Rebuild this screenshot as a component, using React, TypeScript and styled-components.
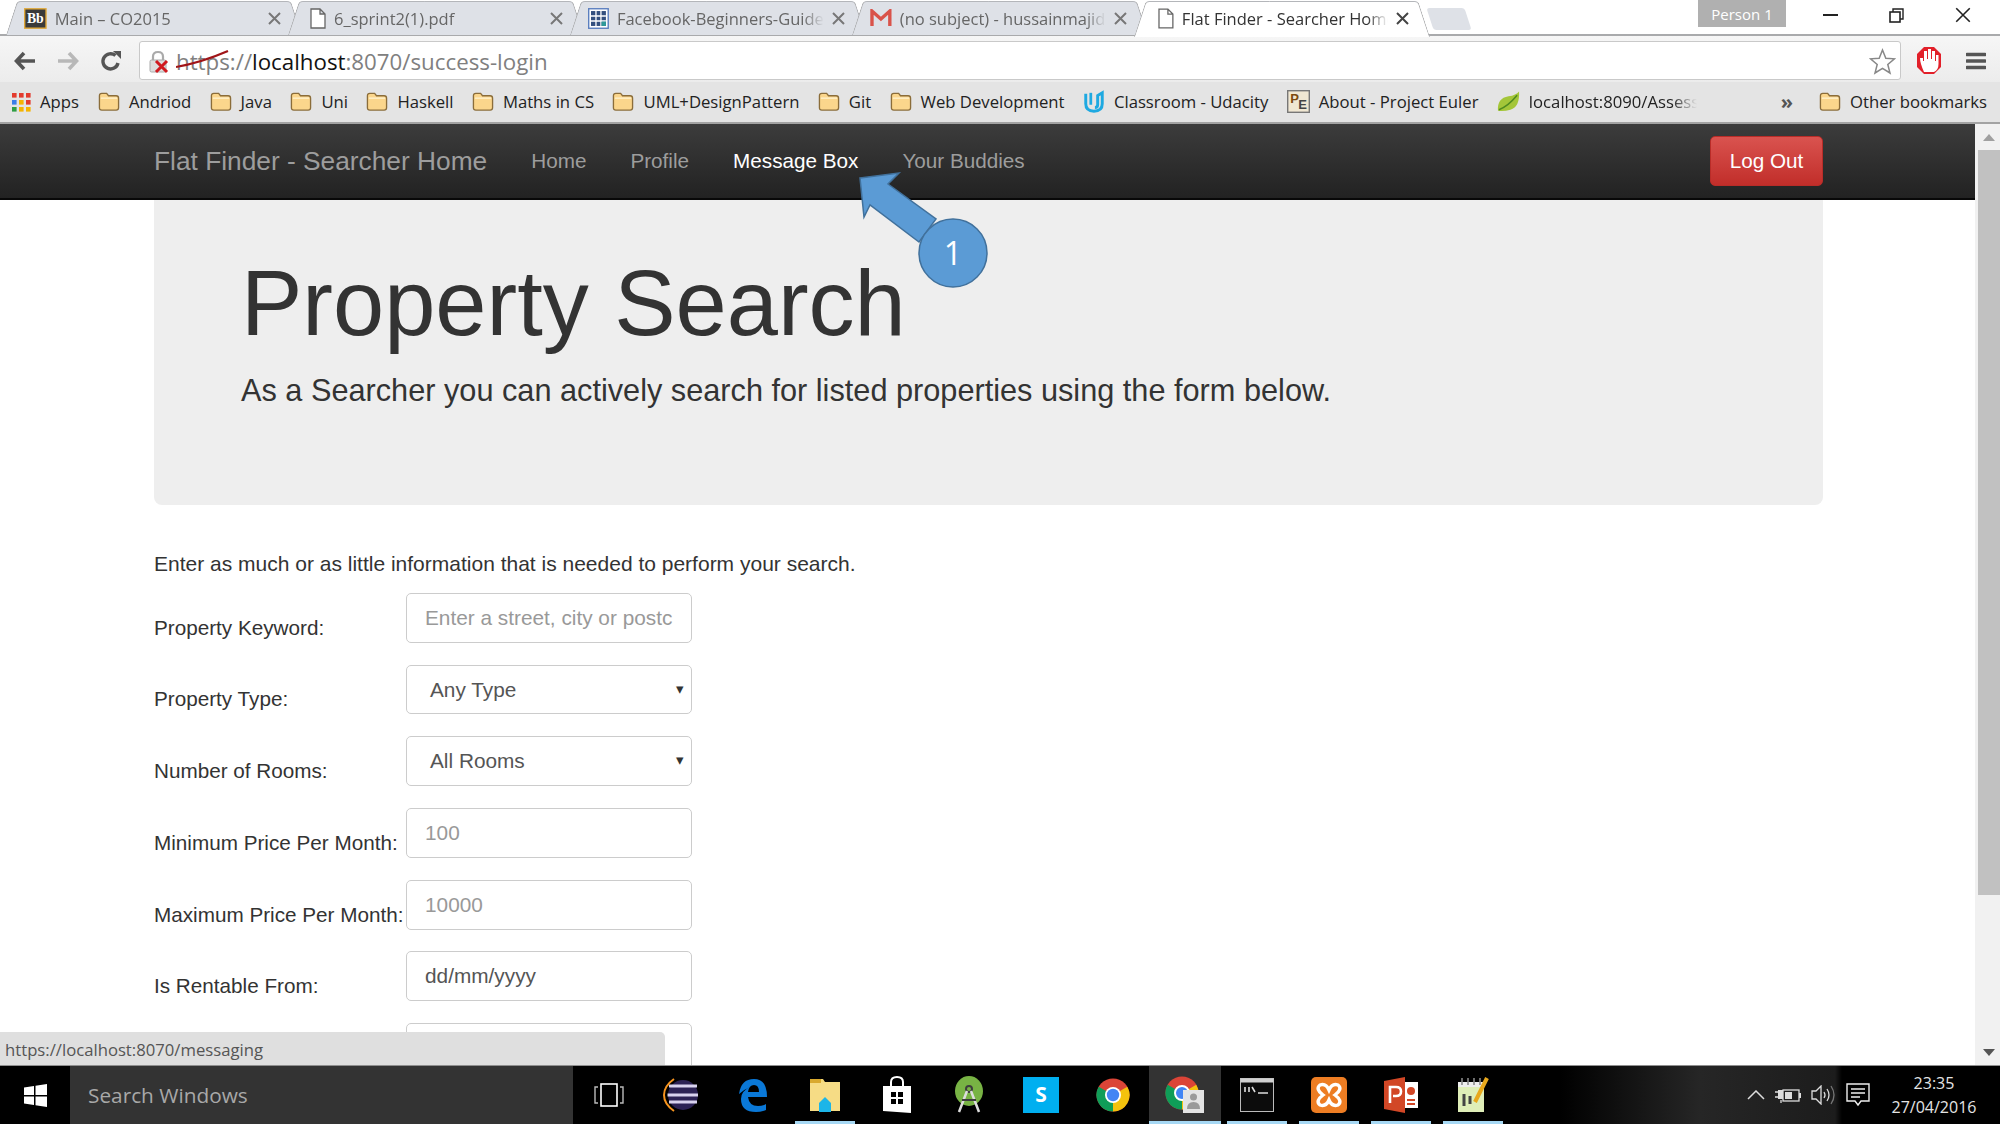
import React from 'react';
import styled, { createGlobalStyle } from 'styled-components';

const GlobalStyle = createGlobalStyle`
  html, body { margin: 0; padding: 0; background: #fff; }
  * { box-sizing: border-box; }
  body { font-family: 'Liberation Sans', Arial, sans-serif; }
`;

const Screen = styled.div`
  width: 2000px;
  height: 1124px;
  display: flex;
  flex-direction: column;
  overflow: hidden;
`;

/* ---------- browser chrome ---------- */

const TabStrip = styled.div`
  height: 36px;
  flex: none;
  display: flex;
  align-items: flex-start;
  padding-left: 6px;
  background: #fff;
  border-bottom: 2px solid #a9aaac;
`;

const Tab = styled.div<{ $active?: boolean; $indent?: number }>`
  position: relative;
  width: 296px;
  height: ${(p) => (p.$active ? '36px' : '34px')};
  margin: 1px -14px 0 0;
  padding-left: ${(p) => p.$indent ?? 18}px;
  padding-bottom: ${(p) => (p.$active ? 2 : 0)}px;
  display: flex;
  align-items: center;
  gap: 8px;
  z-index: ${(p) => (p.$active ? 2 : 1)};
  font-family: 'Open Sans', sans-serif;
  font-size: 16.5px;
  color: ${(p) => (p.$active ? '#333' : '#666')};

  &::before,
  &::after {
    content: '';
    position: absolute;
    top: 0;
    bottom: 0;
    width: 50%;
    z-index: -1;
    background: ${(p) => (p.$active ? '#fff' : '#dee1e7')};
    border-top: 1px solid #b4b6ba;
  }
  &::before {
    left: 0;
    transform: skewX(-18deg);
    transform-origin: bottom;
    border-left: 1px solid #a9aaac;
    border-radius: 4px 0 0 0;
  }
  &::after {
    right: 0;
    transform: skewX(18deg);
    transform-origin: bottom;
    border-right: 1px solid #a9aaac;
    border-radius: 0 4px 0 0;
  }
`;

const TabTitle = styled.span`
  width: 208px;
  white-space: nowrap;
  overflow: hidden;
  mask-image: linear-gradient(90deg, #000 90%, transparent);
`;

const TabClose = styled.span`
  margin-left: auto;
  margin-right: 21px;
  display: flex;
`;

const NewTab = styled.div`
  width: 38px;
  height: 22px;
  margin: 8px 0 0 14px;
  background: #dee1e7;
  border-radius: 3px;
  transform: skewX(18deg);
`;

const PersonBadge = styled.div`
  width: 88px;
  height: 27px;
  margin-left: auto;
  background: #b0b0b0;
  color: #fff;
  font-family: 'Open Sans', sans-serif;
  font-size: 15px;
  display: flex;
  align-items: center;
  justify-content: center;
`;

const WindowControls = styled.div`
  width: 214px;
  height: 30px;
  padding: 0 4px 0 11px;
  display: flex;
`;

const WindowButton = styled.div`
  flex: 1;
  display: flex;
  align-items: center;
  justify-content: center;
`;

const Toolbar = styled.div`
  height: 46px;
  flex: none;
  display: flex;
  align-items: center;
  background: linear-gradient(#f6f6f6, #ececec);
  padding: 3px 0 0 0;
`;

const NavIcons = styled.div`
  width: 139px;
  display: flex;
  align-items: center;
  padding-left: 14px;
  gap: 21px;
`;

const AddressBar = styled.div`
  width: 1762px;
  height: 39px;
  background: #fff;
  border: 1px solid #c9c9c9;
  border-radius: 3px;
  display: flex;
  align-items: center;
  padding: 2px 4px 0 7px;
  font-family: 'Open Sans', sans-serif;
  font-size: 22.3px;
  color: #808080;
`;

const Scheme = styled.span`
  margin-left: 5px;
  position: relative;
`;

const StruckOut = styled.svg`
  position: absolute;
  left: 0;
  top: 3px;
`;

const Host = styled.span`
  color: #111;
`;

const StarSlot = styled.span`
  margin-left: auto;
  display: flex;
`;

const ToolbarEnd = styled.div`
  flex: 1;
  display: flex;
  align-items: center;
  justify-content: space-between;
  padding: 0 14px 0 15px;
`;

const BookmarksBar = styled.div`
  height: 42px;
  flex: none;
  display: flex;
  align-items: center;
  padding: 0 13px 1px 11px;
  background: #e4e4e4;
  border-bottom: 2px solid #a3a3a3;
  font-family: 'Open Sans', sans-serif;
  font-size: 16.7px;
  color: #222;
  white-space: nowrap;
`;

const Bookmark = styled.span<{ $gap?: number }>`
  display: flex;
  align-items: center;
  gap: 9px;
  margin-right: ${(p) => p.$gap ?? 19}px;
`;

const FadedLabel = styled.span`
  width: 168px;
  overflow: hidden;
  mask-image: linear-gradient(90deg, #000 85%, transparent);
`;

const Chevrons = styled.span`
  margin-left: auto;
  margin-right: 26px;
  font-weight: 700;
  font-size: 20px;
  color: #555;
  line-height: 1;
`;

/* ---------- page ---------- */

const Viewport = styled.div`
  position: relative;
  flex: 1;
  min-height: 0;
  display: flex;
  overflow: hidden;
`;

const Page = styled.div`
  flex: 1;
  min-width: 0;
  background: #fff;
`;

const NavBar = styled.nav`
  height: 76px;
  display: flex;
  align-items: center;
  padding: 0 152px 0 154px;
  background: linear-gradient(#3c3c3c, #222);
  border-bottom: 2px solid #080808;
`;

const Brand = styled.a`
  font-size: 26.3px;
  color: #9d9d9d;
  margin-right: 44px;
`;

const NavLink = styled.a<{ $active?: boolean }>`
  font-size: 20.7px;
  color: ${(p) => (p.$active ? '#fff' : '#9d9d9d')};
  margin-right: 44px;
`;

const LogOut = styled.button`
  margin-left: auto;
  width: 113px;
  height: 50px;
  border: 1px solid #b92c28;
  border-radius: 5px;
  background: linear-gradient(#d9534f, #c12e2a);
  color: #fff;
  font-family: inherit;
  font-size: 20.7px;
`;

const Container = styled.main`
  padding: 0 152px 0 154px;
`;

const Jumbotron = styled.section`
  height: 305px;
  padding: 53px 87px 0;
  background: #eee;
  border-radius: 0 0 8px 8px;
  color: #333;
`;

const Title = styled.h1`
  margin: 0;
  font-weight: 400;
  font-size: 92px;
  line-height: 101px;
  color: #333;
`;

const Lead = styled.p`
  margin: 15px 0 0;
  font-size: 30.7px;
  line-height: 44px;
`;

const Intro = styled.p`
  margin: 47px 0 0;
  font-size: 21px;
  line-height: 24px;
  color: #333;
`;

const Form = styled.form`
  margin-top: 17px;
  display: flex;
  flex-direction: column;
  gap: 21.9px;
`;

const Row = styled.div`
  display: grid;
  grid-template-columns: 252px 286px;
  align-items: end;
`;

const Label = styled.label`
  font-size: 20.7px;
  line-height: 24px;
  color: #333;
  white-space: nowrap;
  padding-bottom: 3px;
`;

const Field = styled.div<{ $placeholder?: boolean }>`
  position: relative;
  height: 49.8px;
  border: 1px solid #ccc;
  border-radius: 5px;
  background: #fff;
  display: flex;
  align-items: center;
  padding: 0 18px;
  font-size: 20.8px;
  color: ${(p) => (p.$placeholder ? '#999' : '#555')};
  white-space: nowrap;
  overflow: hidden;
`;

const SelectText = styled.span`
  margin-left: 5px;
`;

const SelectCaret = styled.span`
  position: absolute;
  right: 7px;
  top: 14px;
  font-size: 15px;
  color: #333;
`;

const Scrollbar = styled.div`
  width: 25px;
  flex: none;
  padding-left: 3px;
  background: #f1f1f1;
  display: flex;
  flex-direction: column;
  align-items: center;
`;

const ScrollArrow = styled.div<{ $down?: boolean }>`
  height: 26px;
  flex: none;
  display: flex;
  align-items: center;
  justify-content: center;
  ${(p) => p.$down && 'margin-top: auto;'}
`;

const ScrollThumb = styled.div`
  width: 100%;
  height: 745px;
  background: #c1c1c1;
`;

const StatusBubble = styled.div`
  position: absolute;
  left: 0;
  bottom: 0;
  width: 665px;
  height: 33px;
  padding: 2px 0 0 5px;
  display: flex;
  align-items: center;
  background: #dfdfdf;
  border-radius: 0 5px 0 0;
  font-family: 'Open Sans', sans-serif;
  font-size: 16.7px;
  color: #555;
`;

const Callout = styled.svg`
  position: absolute;
  left: 850px;
  top: 41px;
`;

/* ---------- taskbar ---------- */

const Taskbar = styled.footer`
  height: 59px;
  flex: none;
  display: flex;
  align-items: stretch;
  border-top: 1px solid #8f8f8f;
  background: linear-gradient(90deg, #000 0, #000 1560px, #262626 1700px, #1c1c1c 1835px, #000 1842px);
  color: #fff;
  font-family: 'Open Sans', sans-serif;
`;

const StartButton = styled.div`
  width: 70px;
  display: flex;
  align-items: center;
  justify-content: center;
`;

const SearchBox = styled.div`
  width: 503px;
  background: #333;
  color: #a8a8a8;
  font-size: 20.8px;
  display: flex;
  align-items: center;
  padding-left: 18px;
`;

const TaskItem = styled.div<{ $running?: boolean; $current?: boolean }>`
  position: relative;
  width: 72px;
  display: flex;
  align-items: center;
  justify-content: center;
  background: ${(p) => (p.$current ? '#333' : 'transparent')};

  ${(p) =>
    p.$running &&
    `&::after {
      content: '';
      position: absolute;
      bottom: 0;
      height: 3px;
      left: ${p.$current ? 0 : 6}px;
      right: ${p.$current ? 0 : 6}px;
      background: #a6d8f4;
    }`}
`;

const Tray = styled.div`
  margin-left: auto;
  display: flex;
  align-items: center;
  gap: 10px;
  padding-right: 21px;
`;

const Clock = styled.div`
  width: 90px;
  margin-left: 9px;
  text-align: center;
  font-size: 16px;
  line-height: 24px;
  color: #e4e4e4;
`;

/* ---------- small drawings ---------- */

const FolderIcon = () => (
  <svg width="22" height="21" viewBox="0 0 23 21">
    <path d="M1.5 4.5 Q1.5 2 4 2 H9 L11 4.5 H19 Q21.5 4.5 21.5 7 V17 Q21.5 19.5 19 19.5 H4 Q1.5 19.5 1.5 17 Z" fill="#fbd68c" stroke="#8b6d3a" strokeWidth="1.4" />
    <path d="M3 7 H20" stroke="#fff0c8" strokeWidth="1.5" />
  </svg>
);

const PageIcon = () => (
  <svg width="16" height="21" viewBox="0 0 16 21">
    <path d="M1 1 H10 L15 6 V20 H1 Z M10 1 V6 H15" fill="#fff" stroke="#666" strokeWidth="1.3" />
  </svg>
);

const CloseGlyph = ({ size = 13, color = '#777', weight = 2 }: { size?: number; color?: string; weight?: number }) => (
  <svg width={size} height={size} viewBox="0 0 13 13">
    <path d="M1 1 L12 12 M12 1 L1 12" stroke={color} strokeWidth={weight} />
  </svg>
);

const BlackboardIcon = () => (
  <svg width="23" height="21" viewBox="0 0 23 21">
    <rect x="0.7" y="0.7" width="21.6" height="19.6" fill="#3a3a3a" stroke="#e0a838" strokeWidth="1.4" />
    <text x="11.5" y="15.5" textAnchor="middle" fontFamily="Liberation Serif, serif" fontWeight="700" fontSize="14" fill="#fff">Bb</text>
  </svg>
);

const SheetIcon = () => (
  <svg width="21" height="21" viewBox="0 0 21 21">
    <rect x="0.7" y="0.7" width="19.6" height="19.6" fill="#fff" stroke="#5b7fbf" strokeWidth="1.4" />
    <path d="M3 3 H18 V18 H3 Z" fill="#34507f" />
    <path d="M8 3 V18 M13 3 V18 M3 8 H18 M3 13 H18" stroke="#fff" strokeWidth="1.3" />
    <rect x="13.6" y="13.6" width="4.4" height="4.4" fill="#2e9a9a" />
  </svg>
);

const GmailIcon = () => (
  <svg width="22" height="18" viewBox="0 0 22 18">
    <path d="M2 17 V2 L11 10 L20 2 V17" fill="none" stroke="#d9534a" strokeWidth="3.4" />
  </svg>
);

const AppsIcon = () => (
  <svg width="20" height="20" viewBox="0 0 20 20">
    {['#e33b2e', '#e33b2e', '#e33b2e', '#3a7ee8', '#f5b400', '#e33b2e', '#2f9e44', '#f5b400', '#f5b400'].map((c, i) => (
      <rect key={i} x={1 + (i % 3) * 7} y={1 + Math.floor(i / 3) * 7} width="4.6" height="4.6" fill={c} />
    ))}
  </svg>
);

const UdacityIcon = () => (
  <svg width="22" height="24" viewBox="0 0 24 24">
    <path d="M3 3 V14 Q3 22 12 22 Q21 22 21 14 V2 L16 5 V15 Q16 18 13 18" fill="none" stroke="#1ea9e1" strokeWidth="3.2" />
    <path d="M8.5 2 V15" stroke="#1ea9e1" strokeWidth="3" />
  </svg>
);

const EulerIcon = () => (
  <svg width="23" height="23" viewBox="0 0 23 23">
    <rect x="0.7" y="0.7" width="21.6" height="21.6" fill="#f0e7d2" stroke="#777" strokeWidth="1.4" />
    <text x="7.5" y="13" textAnchor="middle" fontFamily="Liberation Sans, sans-serif" fontWeight="700" fontSize="13" fill="#7a4a10">P</text>
    <text x="15.5" y="19" textAnchor="middle" fontFamily="Liberation Sans, sans-serif" fontWeight="700" fontSize="13" fill="#444">E</text>
  </svg>
);

const LeafIcon = () => (
  <svg width="23" height="22" viewBox="0 0 24 22">
    <path d="M1 20 Q0 7 12 5 Q20 4 23 0 Q24 16 14 19 Q7 21 1 20 Z" fill="#a4c639" />
    <path d="M2 19 Q11 16 21 4" fill="none" stroke="#4f8a1f" strokeWidth="1.6" />
  </svg>
);

const BackArrow = ({ color = '#555' }: { color?: string }) => (
  <svg width="22" height="20" viewBox="0 0 22 20">
    <path d="M10 2 L2.5 10 L10 18 M3 10 H21" fill="none" stroke={color} strokeWidth="3.6" />
  </svg>
);

const ForwardArrow = () => (
  <svg width="22" height="20" viewBox="0 0 22 20">
    <path d="M12 2 L19.5 10 L12 18 M19 10 H1" fill="none" stroke="#b8b8b8" strokeWidth="3.6" />
  </svg>
);

const ReloadIcon = () => (
  <svg width="22" height="22" viewBox="0 0 22 22">
    <path d="M18 13 A7.6 7.6 0 1 1 15.5 5.5" fill="none" stroke="#555" strokeWidth="3.4" />
    <path d="M13 1 H21 V9 Z" fill="#555" />
  </svg>
);

const BrokenLock = () => (
  <svg width="24" height="24" viewBox="0 0 24 24">
    <path d="M6 11 V6.5 Q6 2 11 2 Q16 2 16 6.5 V11" fill="none" stroke="#aaa" strokeWidth="2.2" />
    <rect x="3" y="10" width="16" height="12" rx="1.5" fill="#ddd" stroke="#aaa" />
    <path d="M9 11 L20 22 M20 11 L9 22" stroke="#d0191f" strokeWidth="3" />
  </svg>
);

const StarOutline = () => (
  <svg width="27" height="27" viewBox="0 0 27 27">
    <path d="M13.5 2 L16.8 10.2 L25.5 10.8 L18.8 16.4 L21 25 L13.5 20.3 L6 25 L8.2 16.4 L1.5 10.8 L10.2 10.2 Z" fill="#fff" stroke="#888" strokeWidth="1.5" />
  </svg>
);

const BlockerIcon = () => (
  <svg width="26" height="29" viewBox="0 0 26 29">
    <path d="M8 1 H18 L25 8 V21 L18 28 H8 L1 21 V8 Z" fill="#e2202a" />
    <path d="M8 26 Q4 17 4 12 H7 V15 H8 V5 H11 V13 H12 V3 H15 V13 H16 V5 H19 V15 H20 V9 H22.5 V18 Q22.5 24 18 26 Z" fill="#fff" />
  </svg>
);

const MenuIcon = () => (
  <svg width="20" height="20" viewBox="0 0 20 20">
    <path d="M1 3.5 H19 M1 10 H19 M1 16.5 H19" stroke="#555" strokeWidth="3.4" strokeLinecap="round" />
  </svg>
);

const WindowsLogo = () => (
  <svg width="23" height="23" viewBox="0 0 23 23">
    <path d="M0 3.5 L10 2 V11 H0 Z M11.5 1.7 L23 0 V11 H11.5 Z M0 12.5 H10 V21 L0 19.6 Z M11.5 12.5 H23 V23 L11.5 21.3 Z" fill="#fff" />
  </svg>
);

const TaskViewIcon = () => (
  <svg width="30" height="24" viewBox="0 0 30 24">
    <rect x="7" y="1" width="16" height="22" fill="none" stroke="#fff" strokeWidth="1.6" />
    <path d="M4 4 H1 V20 H4 M26 4 H29 V20 H26" fill="none" stroke="#bbb" strokeWidth="1.4" />
  </svg>
);

const EclipseIcon = () => (
  <svg width="36" height="36" viewBox="0 0 36 36">
    <circle cx="20" cy="18" r="15" fill="#2c2255" />
    <path d="M6 9 H34 M4.5 18 H35 M6 25 H34" stroke="#d8d2ee" strokeWidth="3" />
    <path d="M11 2 Q1 9 1 18 Q1 27 11 34" fill="none" stroke="#f7941e" strokeWidth="2" />
  </svg>
);

const EdgeIcon = () => (
  <svg width="32" height="36" viewBox="0 0 32 36">
    <path d="M2 17 Q4 2 17 2 Q30 2 30 20 H11 Q12 29 21 29 Q26 29 29 27 V33 Q24 35 19 35 Q4 35 4 22 Q4 14 13 10 Q8 12 2 17 Z M11 15 H22 Q22 8 17 8 Q12 8 11 15 Z" fill="#0a78d7" fillRule="evenodd" />
  </svg>
);

const ExplorerIcon = () => (
  <svg width="32" height="36" viewBox="0 0 32 36">
    <path d="M1 2 H14 L16 5 H31 V34 H1 Z" fill="#f3d774" />
    <rect x="1" y="5" width="30" height="29" fill="#f6dc85" />
    <rect x="1" y="2" width="11" height="4" fill="#d9a92e" />
    <path d="M10 26 L16 20 L22 26 V35 H10 Z" fill="#1cb5e8" />
  </svg>
);

const StoreIcon = () => (
  <svg width="30" height="38" viewBox="0 0 30 38">
    <path d="M1 10 H29 V37 L1 35 Z" fill="#fff" />
    <path d="M9 10 V6 Q9 1 15 1 Q21 1 21 6 V10" fill="none" stroke="#fff" strokeWidth="2" />
    <path d="M9 16 H14 V21 H9 Z M16 16 H21 V21 H16 Z M9 23 H14 V28 H9 Z M16 23 H21 V28 H16 Z" fill="#000" />
  </svg>
);

const AndroidStudioIcon = () => (
  <svg width="32" height="38" viewBox="0 0 32 38">
    <ellipse cx="16" cy="15" rx="14" ry="15" fill="#78b344" />
    <circle cx="16" cy="13" r="3" fill="none" stroke="#3d3d3d" strokeWidth="2" />
    <path d="M14 15 L6 36 M18 15 L26 36" stroke="#ddd" strokeWidth="2.5" />
    <path d="M9 24 H23" stroke="#3d3d3d" strokeWidth="2" />
  </svg>
);

const SkypeIcon = () => (
  <svg width="36" height="36" viewBox="0 0 36 36">
    <rect width="36" height="36" fill="#00aff0" />
    <text x="18" y="25" textAnchor="middle" fontFamily="Open Sans, sans-serif" fontWeight="700" fontSize="21" fill="#fff">S</text>
  </svg>
);

const ChromeIcon = ({ size = 34 }: { size?: number }) => (
  <svg width={size} height={size} viewBox="0 0 34 34">
    <circle cx="17" cy="17" r="16.5" fill="#db4437" />
    <path d="M17 17 L31.3 8.7 A16.5 16.5 0 0 1 17 33.5 Z" fill="#f4c20d" />
    <path d="M17 17 L17 33.5 A16.5 16.5 0 0 1 2.7 8.7 Z" fill="#0f9d58" />
    <circle cx="17" cy="17" r="8" fill="#fff" />
    <circle cx="17" cy="17" r="6.2" fill="#4285f4" />
  </svg>
);

const ChromePersonIcon = () => (
  <svg width="40" height="38" viewBox="0 0 40 38">
    <circle cx="17" cy="17" r="16.5" fill="#db4437" />
    <path d="M17 17 L31.3 8.7 A16.5 16.5 0 0 1 17 33.5 Z" fill="#f4c20d" />
    <path d="M17 17 L17 33.5 A16.5 16.5 0 0 1 2.7 8.7 Z" fill="#0f9d58" />
    <circle cx="17" cy="17" r="7" fill="#4285f4" stroke="#fff" strokeWidth="2" />
    <rect x="18" y="14" width="21" height="23" fill="#e4e4e4" />
    <circle cx="28.5" cy="21" r="3.5" fill="#9a9a9a" />
    <path d="M22 33 Q22 26 28.5 26 Q35 26 35 33 Z" fill="#9a9a9a" />
  </svg>
);

const ConsoleIcon = () => (
  <svg width="34" height="34" viewBox="0 0 34 34">
    <rect x="0.5" y="0.5" width="33" height="33" fill="#0c0c0c" stroke="#bbb" />
    <rect x="0.5" y="0.5" width="33" height="4" fill="#d0d0d0" />
    <path d="M5 9 V14 M9 9 V14 M12 9 L15 14 M18 15 H28" stroke="#ddd" strokeWidth="1.6" />
  </svg>
);

const XamppIcon = () => (
  <svg width="36" height="36" viewBox="0 0 36 36">
    <rect width="36" height="36" rx="5" fill="#ed7d23" />
    <path d="M9 8 Q15 6 18 13 Q21 6 27 8 Q32 12 24 18 Q32 24 27 28 Q21 30 18 23 Q15 30 9 28 Q4 24 12 18 Q4 12 9 8 Z" fill="none" stroke="#fff" strokeWidth="3.4" />
  </svg>
);

const PowerPointIcon = () => (
  <svg width="34" height="36" viewBox="0 0 34 36">
    <rect x="14" y="5" width="20" height="26" fill="#fff" />
    <path d="M0 4 L21 0 V36 L0 32 Z" fill="#d24726" />
    <path d="M6 26 V10 H12 Q17 10 17 14.5 Q17 19 12 19 H9" fill="none" stroke="#fff" strokeWidth="2.6" />
    <circle cx="27" cy="14" r="4" fill="#d24726" />
    <path d="M23 23 H31 M23 27 H31" stroke="#d24726" strokeWidth="1.8" />
  </svg>
);

const NotepadIcon = () => (
  <svg width="34" height="38" viewBox="0 0 34 38">
    <rect x="2" y="6" width="26" height="30" fill="#dfeeb8" />
    <rect x="2" y="6" width="26" height="5" fill="#eee" />
    <path d="M6 2 V9 M12 2 V9 M18 2 V9 M24 2 V9" stroke="#888" strokeWidth="1.6" />
    <path d="M8 18 V30 M14 20 V28" stroke="#444" strokeWidth="3" />
    <path d="M19 26 L31 2" stroke="#e8a81c" strokeWidth="4" />
  </svg>
);

const TrayChevron = () => (
  <svg width="18" height="10" viewBox="0 0 18 10">
    <path d="M1 9 L9 1 L17 9" fill="none" stroke="#ddd" strokeWidth="1.5" />
  </svg>
);

const BatteryIcon = () => (
  <svg width="26" height="16" viewBox="0 0 26 16">
    <path d="M0 5 H3 M0 10 H3" stroke="#ddd" strokeWidth="1.3" />
    <rect x="3" y="3" width="5" height="9" fill="#ddd" />
    <path d="M6 13 V16" stroke="#ddd" strokeWidth="1.3" />
    <rect x="8" y="3" width="16" height="11" fill="none" stroke="#ddd" strokeWidth="1.3" />
    <rect x="10" y="5" width="7" height="7" fill="#ddd" />
    <rect x="24" y="6" width="2" height="5" fill="#ddd" />
  </svg>
);

const SpeakerIcon = () => (
  <svg width="25" height="20" viewBox="0 0 25 20">
    <path d="M1 6 H5 L10 1 V19 L5 14 H1 Z" fill="none" stroke="#ddd" strokeWidth="1.3" />
    <path d="M13 7 Q15 10 13 13 M16 4 Q20 10 16 16" fill="none" stroke="#ddd" strokeWidth="1.3" />
    <path d="M20 1 Q26 10 20 19" fill="none" stroke="#777" strokeWidth="1.3" />
  </svg>
);

const NotificationIcon = () => (
  <svg width="24" height="24" viewBox="0 0 24 24">
    <path d="M1 1 H23 V18 H15 L12 22 L9 18 H1 Z" fill="none" stroke="#eee" strokeWidth="1.4" />
    <path d="M5 6 H19 M5 10 H19 M5 14 H14" stroke="#eee" strokeWidth="1.3" />
  </svg>
);

const tabs = [
  { title: 'Main – CO2015', icon: <BlackboardIcon />, indent: 18 },
  { title: '6_sprint2(1).pdf', icon: <PageIcon />, indent: 22 },
  { title: 'Facebook-Beginners-Guide', icon: <SheetIcon />, indent: 18 },
  { title: '(no subject) - hussainmajid', icon: <GmailIcon />, indent: 18 },
];

const bookmarks = ['Andriod', 'Java', 'Uni', 'Haskell', 'Maths in CS', 'UML+DesignPattern', 'Git', 'Web Development'];

const fields = [
  { label: 'Property Keyword:', value: 'Enter a street, city or postc', placeholder: true },
  { label: 'Property Type:', value: 'Any Type', select: true },
  { label: 'Number of Rooms:', value: 'All Rooms', select: true },
  { label: 'Minimum Price Per Month:', value: '100', placeholder: true },
  { label: 'Maximum Price Per Month:', value: '10000', placeholder: true },
  { label: 'Is Rentable From:', value: 'dd/mm/yyyy' },
  { label: '', value: '' },
];

const taskItems: { icon: React.ReactNode; running?: boolean; current?: boolean }[] = [
  { icon: <TaskViewIcon /> },
  { icon: <EclipseIcon /> },
  { icon: <EdgeIcon /> },
  { icon: <ExplorerIcon />, running: true },
  { icon: <StoreIcon /> },
  { icon: <AndroidStudioIcon /> },
  { icon: <SkypeIcon /> },
  { icon: <ChromeIcon /> },
  { icon: <ChromePersonIcon />, running: true, current: true },
  { icon: <ConsoleIcon />, running: true },
  { icon: <XamppIcon />, running: true },
  { icon: <PowerPointIcon />, running: true },
  { icon: <NotepadIcon />, running: true },
];

const App = (): JSX.Element => (
  <Screen>
    <GlobalStyle />

    <TabStrip>
      {tabs.map((tab) => (
        <Tab key={tab.title} $indent={tab.indent}>
          {tab.icon}
          <TabTitle>{tab.title}</TabTitle>
          <TabClose>
            <CloseGlyph />
          </TabClose>
        </Tab>
      ))}
      <Tab $active $indent={24}>
        <PageIcon />
        <TabTitle>Flat Finder - Searcher Home</TabTitle>
        <TabClose>
          <CloseGlyph color="#444" />
        </TabClose>
      </Tab>
      <NewTab />
      <PersonBadge>Person 1</PersonBadge>
      <WindowControls>
        <WindowButton>
          <svg width="15" height="2" viewBox="0 0 15 2">
            <path d="M0 1 H15" stroke="#222" strokeWidth="2" />
          </svg>
        </WindowButton>
        <WindowButton>
          <svg width="15" height="15" viewBox="0 0 15 15">
            <rect x="1" y="4" width="10" height="10" fill="none" stroke="#222" strokeWidth="1.6" />
            <path d="M4 4 V1 H14 V11 H11" fill="none" stroke="#222" strokeWidth="1.4" />
          </svg>
        </WindowButton>
        <WindowButton>
          <CloseGlyph size={16} color="#222" weight={1.3} />
        </WindowButton>
      </WindowControls>
    </TabStrip>

    <Toolbar>
      <NavIcons>
        <BackArrow />
        <ForwardArrow />
        <ReloadIcon />
      </NavIcons>
      <AddressBar>
        <BrokenLock />
        <Scheme>
          https
          <StruckOut width="54" height="24" viewBox="0 0 54 24">
            <path d="M0 18 Q24 14 52 2" fill="none" stroke="#a01418" strokeWidth="2.2" />
          </StruckOut>
        </Scheme>
        ://
        <Host>localhost</Host>
        :8070/success-login
        <StarSlot>
          <StarOutline />
        </StarSlot>
      </AddressBar>
      <ToolbarEnd>
        <BlockerIcon />
        <MenuIcon />
      </ToolbarEnd>
    </Toolbar>

    <BookmarksBar>
      <Bookmark>
        <AppsIcon />
        Apps
      </Bookmark>
      {bookmarks.map((label) => (
        <Bookmark key={label} $gap={18.4}>
          <FolderIcon />
          {label}
        </Bookmark>
      ))}
      <Bookmark $gap={18.4}>
        <UdacityIcon />
        Classroom - Udacity
      </Bookmark>
      <Bookmark $gap={18.4}>
        <EulerIcon />
        About - Project Euler
      </Bookmark>
      <Bookmark>
        <LeafIcon />
        <FadedLabel>localhost:8090/Assess</FadedLabel>
      </Bookmark>
      <Chevrons>»</Chevrons>
      <Bookmark $gap={0}>
        <FolderIcon />
        Other bookmarks
      </Bookmark>
    </BookmarksBar>

    <Viewport>
      <Page>
        <NavBar>
          <Brand>Flat Finder - Searcher Home</Brand>
          <NavLink>Home</NavLink>
          <NavLink>Profile</NavLink>
          <NavLink $active>Message Box</NavLink>
          <NavLink>Your Buddies</NavLink>
          <LogOut>Log Out</LogOut>
        </NavBar>
        <Container>
          <Jumbotron>
            <Title>Property Search</Title>
            <Lead>As a Searcher you can actively search for listed properties using the form below.</Lead>
          </Jumbotron>
          <Intro>Enter as much or as little information that is needed to perform your search.</Intro>
          <Form>
            {fields.map((f) => (
              <Row key={f.label || 'last'}>
                <Label>{f.label}</Label>
                <Field $placeholder={f.placeholder}>
                  {f.select ? <SelectText>{f.value}</SelectText> : f.value}
                  {f.select && <SelectCaret>▾</SelectCaret>}
                </Field>
              </Row>
            ))}
          </Form>
        </Container>
      </Page>
      <Scrollbar>
        <ScrollArrow>
          <svg width="12" height="7" viewBox="0 0 12 7">
            <path d="M6 0 L12 7 H0 Z" fill="#a0a0a0" />
          </svg>
        </ScrollArrow>
        <ScrollThumb />
        <ScrollArrow $down>
          <svg width="12" height="7" viewBox="0 0 12 7">
            <path d="M0 0 H12 L6 7 Z" fill="#555" />
          </svg>
        </ScrollArrow>
      </Scrollbar>
      <StatusBubble>https://localhost:8070/messaging</StatusBubble>
      <Callout width="145" height="130" viewBox="0 0 145 130">
        <path d="M10 13 L49 8 L38 19 L86 54 L69 77 L20 40 L14 52 Z" fill="#5b9bd5" stroke="#41719c" strokeWidth="1.5" />
        <circle cx="103" cy="88" r="34" fill="#5b9bd5" stroke="#41719c" strokeWidth="1.5" />
        <text x="103" y="100" textAnchor="middle" fontFamily="Open Sans, sans-serif" fontSize="32" fill="#fff">1</text>
      </Callout>
    </Viewport>

    <Taskbar>
      <StartButton>
        <WindowsLogo />
      </StartButton>
      <SearchBox>Search Windows</SearchBox>
      {taskItems.map((item, i) => (
        <TaskItem key={i} $running={item.running} $current={item.current}>
          {item.icon}
        </TaskItem>
      ))}
      <Tray>
        <TrayChevron />
        <BatteryIcon />
        <SpeakerIcon />
        <NotificationIcon />
        <Clock>
          23:35
          <br />
          27/04/2016
        </Clock>
      </Tray>
    </Taskbar>
  </Screen>
);

export default App;
